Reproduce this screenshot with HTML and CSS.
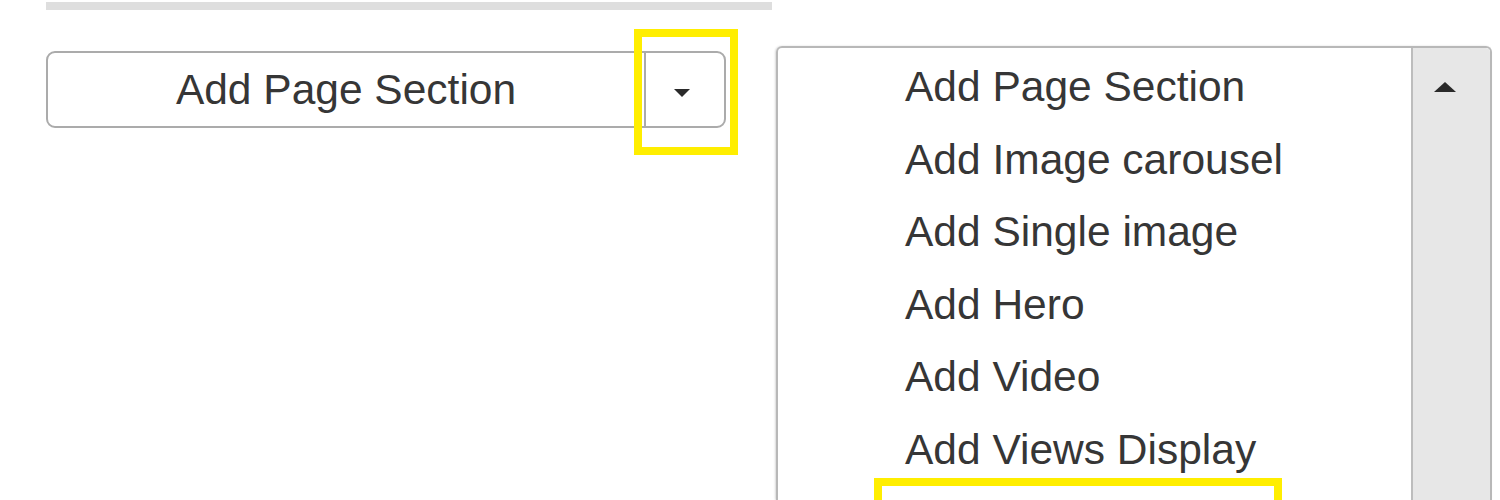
FILE: index.html
```html
<!DOCTYPE html>
<html>
<head>
<meta charset="utf-8">
<link rel="stylesheet" href="styles.css">
</head>
<body>
<div class="page">
  <div class="left">
    <div class="rule"></div>
    <div class="btn-group">
      <div class="btn-main">Add Page Section</div>
      <div class="btn-toggle">
        <span class="caret-down"></span>
        <div class="highlight hl-toggle"></div>
      </div>
    </div>
  </div>
  <div class="list">
    <ul class="options">
      <li>Add Page Section</li>
      <li>Add Image carousel</li>
      <li>Add Single image</li>
      <li>Add Hero</li>
      <li>Add Video</li>
      <li>Add Views Display</li>
      <li class="marked"><div class="highlight hl-item"></div></li>
    </ul>
    <div class="scrollbar"><span class="caret-up"></span></div>
  </div>
</div>
</body>
</html>
```
FILE: styles.css
```css
html, body {
  margin: 0;
  padding: 0;
  background: #fff;
  overflow: hidden;
  height: 500px;
}
.page {
  display: flex;
  align-items: flex-start;
  padding-left: 46px;
  font-family: "Liberation Sans", Arial, sans-serif;
  color: #363636;
}
.left {
  width: 726px;
  display: flex;
  flex-direction: column;
}
.rule {
  height: 8px;
  margin-top: 2px;
  background: #dedede;
}
.btn-group {
  margin-top: 41px;
  width: 680px;
  height: 77px;
  box-sizing: border-box;
  border: 2px solid #ababab;
  border-radius: 9px;
  display: flex;
}
.btn-main {
  flex: 1;
  display: flex;
  align-items: center;
  justify-content: center;
  font-size: 42.5px;
  border-right: 2px solid #ababab;
}
.btn-toggle {
  width: 78px;
  position: relative;
  display: flex;
  align-items: center;
  justify-content: center;
}
.caret-down {
  width: 0;
  height: 0;
  border-left: 8px solid transparent;
  border-right: 8px solid transparent;
  border-top: 8px solid #2a2a2a;
  margin-left: -6px;
  margin-top: 6px;
}
.highlight {
  position: absolute;
  border: 8px solid #ffee00;
  box-sizing: border-box;
}
.hl-toggle {
  left: -12px;
  top: -24px;
  width: 104px;
  height: 126px;
}
.list {
  margin-left: 4px;
  margin-top: 46px;
  width: 716px;
  height: 454px;
  box-sizing: border-box;
  border: 2px solid #b8b8b8;
  border-bottom: 0;
  border-radius: 6px 6px 0 0;
  box-shadow: -1px 0 2px rgba(0,0,0,0.15);
  display: flex;
  overflow: hidden;
}
.options {
  list-style: none;
  margin: 0;
  padding: 3px 0 0 127px;
  flex: 1;
}
.options li {
  height: 72.6px;
  line-height: 72.6px;
  font-size: 42.5px;
  position: relative;
}
.hl-item {
  left: -31px;
  top: -9px;
  width: 408px;
  height: 80px;
}
.scrollbar {
  width: 77px;
  background: #e7e7e7;
  border-left: 2px solid #bdbdbd;
  border-radius: 0 4px 0 0;
  display: flex;
  justify-content: center;
}
.caret-up {
  width: 0;
  height: 0;
  border-left: 11px solid transparent;
  border-right: 11px solid transparent;
  border-bottom: 10px solid #2a2a2a;
  margin-top: 34px;
  margin-left: -14px;
}
```
